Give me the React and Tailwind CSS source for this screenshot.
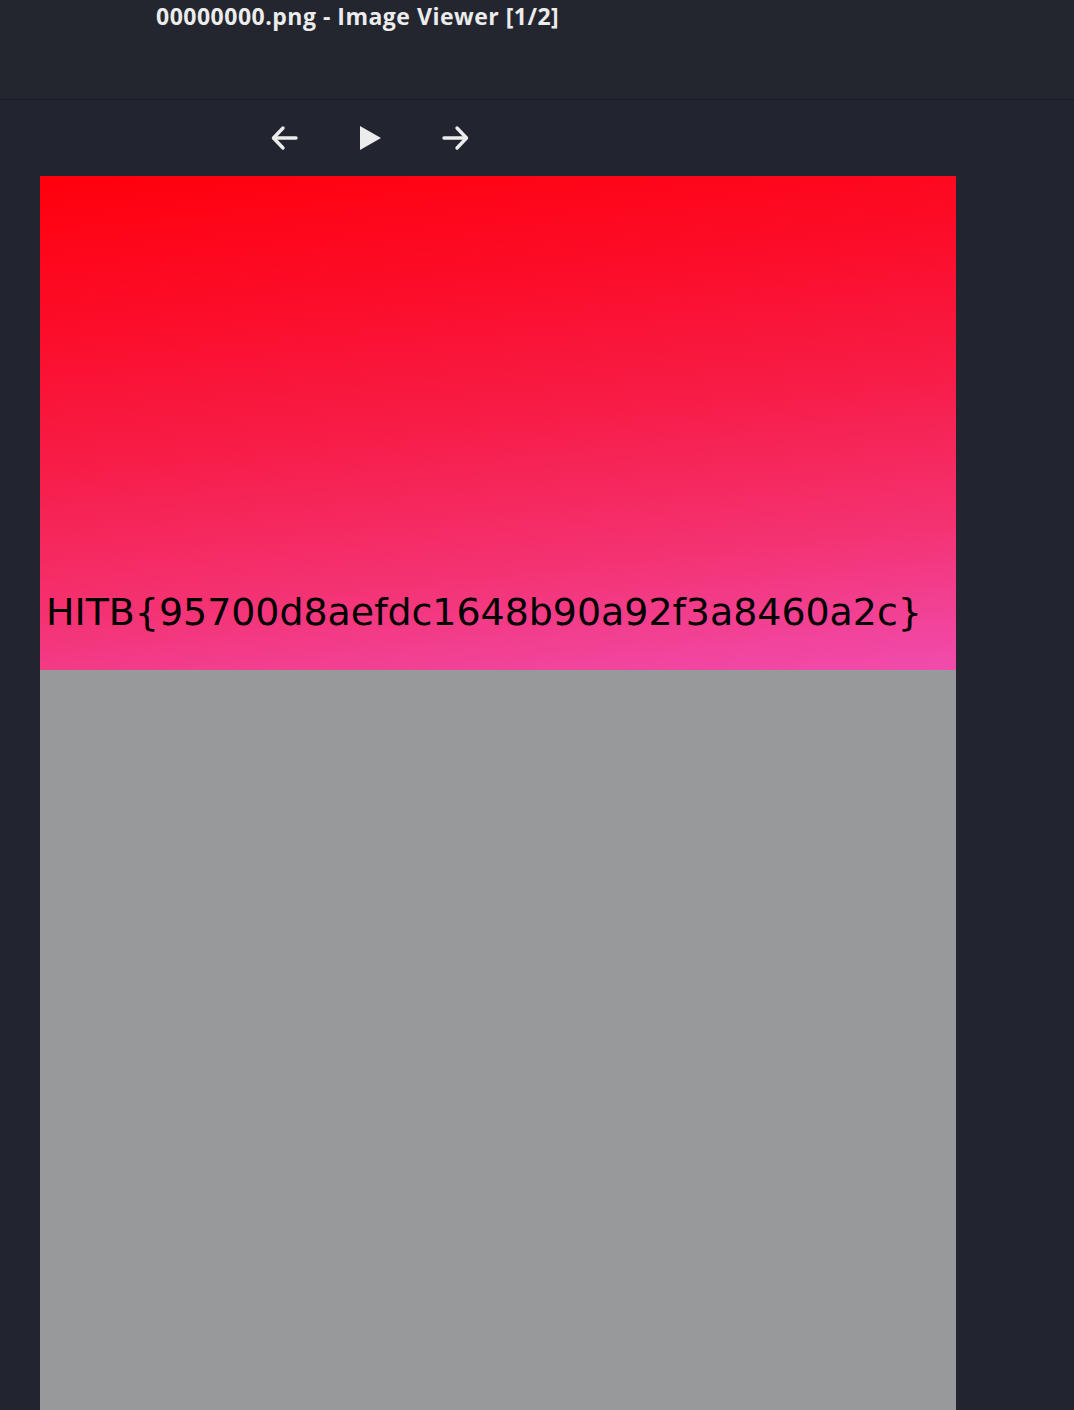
export default function App() {
  return (
    <div className="h-[1410px] w-[1074px] overflow-hidden bg-[#22252f] flex flex-col">
      <div className="h-[100px] shrink-0 bg-[#23262f] border-b border-[#1c1e26] pl-[156px]">
        <div
          className="text-[23px] leading-[32px] font-bold text-[#ececec] tracking-[0.5px]"
          style={{ fontFamily: '"Open Sans", "Noto Sans", sans-serif' }}
        >
          00000000.png - Image Viewer [1/2]
        </div>
      </div>
      <div className="h-[76px] shrink-0 flex items-center pl-[270px] gap-[58px] pb-[1px]">
        <svg width="28" height="28" viewBox="0 0 28 28" fill="none" stroke="#ececec" strokeWidth="3.4" strokeLinecap="round" strokeLinejoin="round">
          <path d="M4 14 H26" />
          <path d="M13 4 L3.5 14 L13 24" />
        </svg>
        <svg width="28" height="28" viewBox="0 0 28 28">
          <path d="M4 2 L25 14 L4 26 Z" fill="#ececec" />
        </svg>
        <svg width="28" height="28" viewBox="0 0 28 28" fill="none" stroke="#ececec" strokeWidth="3.4" strokeLinecap="round" strokeLinejoin="round">
          <path d="M2 14 H24" />
          <path d="M15 4 L24.5 14 L15 24" />
        </svg>
      </div>
      <div className="ml-[40px] w-[916px] flex-1 flex flex-col">
        <div className="h-[494px] shrink-0 bg-[linear-gradient(174deg,#ff000c_0%,#fc0c28_25%,#f71d48_50%,#f43272_75%,#f04cae_100%)] pt-[417px] pl-[6px]">
          <div
            className="text-[37.9px] leading-[38px] text-black whitespace-nowrap"
            style={{ fontFamily: '"DejaVu Sans", sans-serif' }}
          >
            HITB{"{"}95700d8aefdc1648b90a92f3a8460a2c{"}"}
          </div>
        </div>
        <div className="flex-1 bg-[#98999b]" />
      </div>
    </div>
  );
}
